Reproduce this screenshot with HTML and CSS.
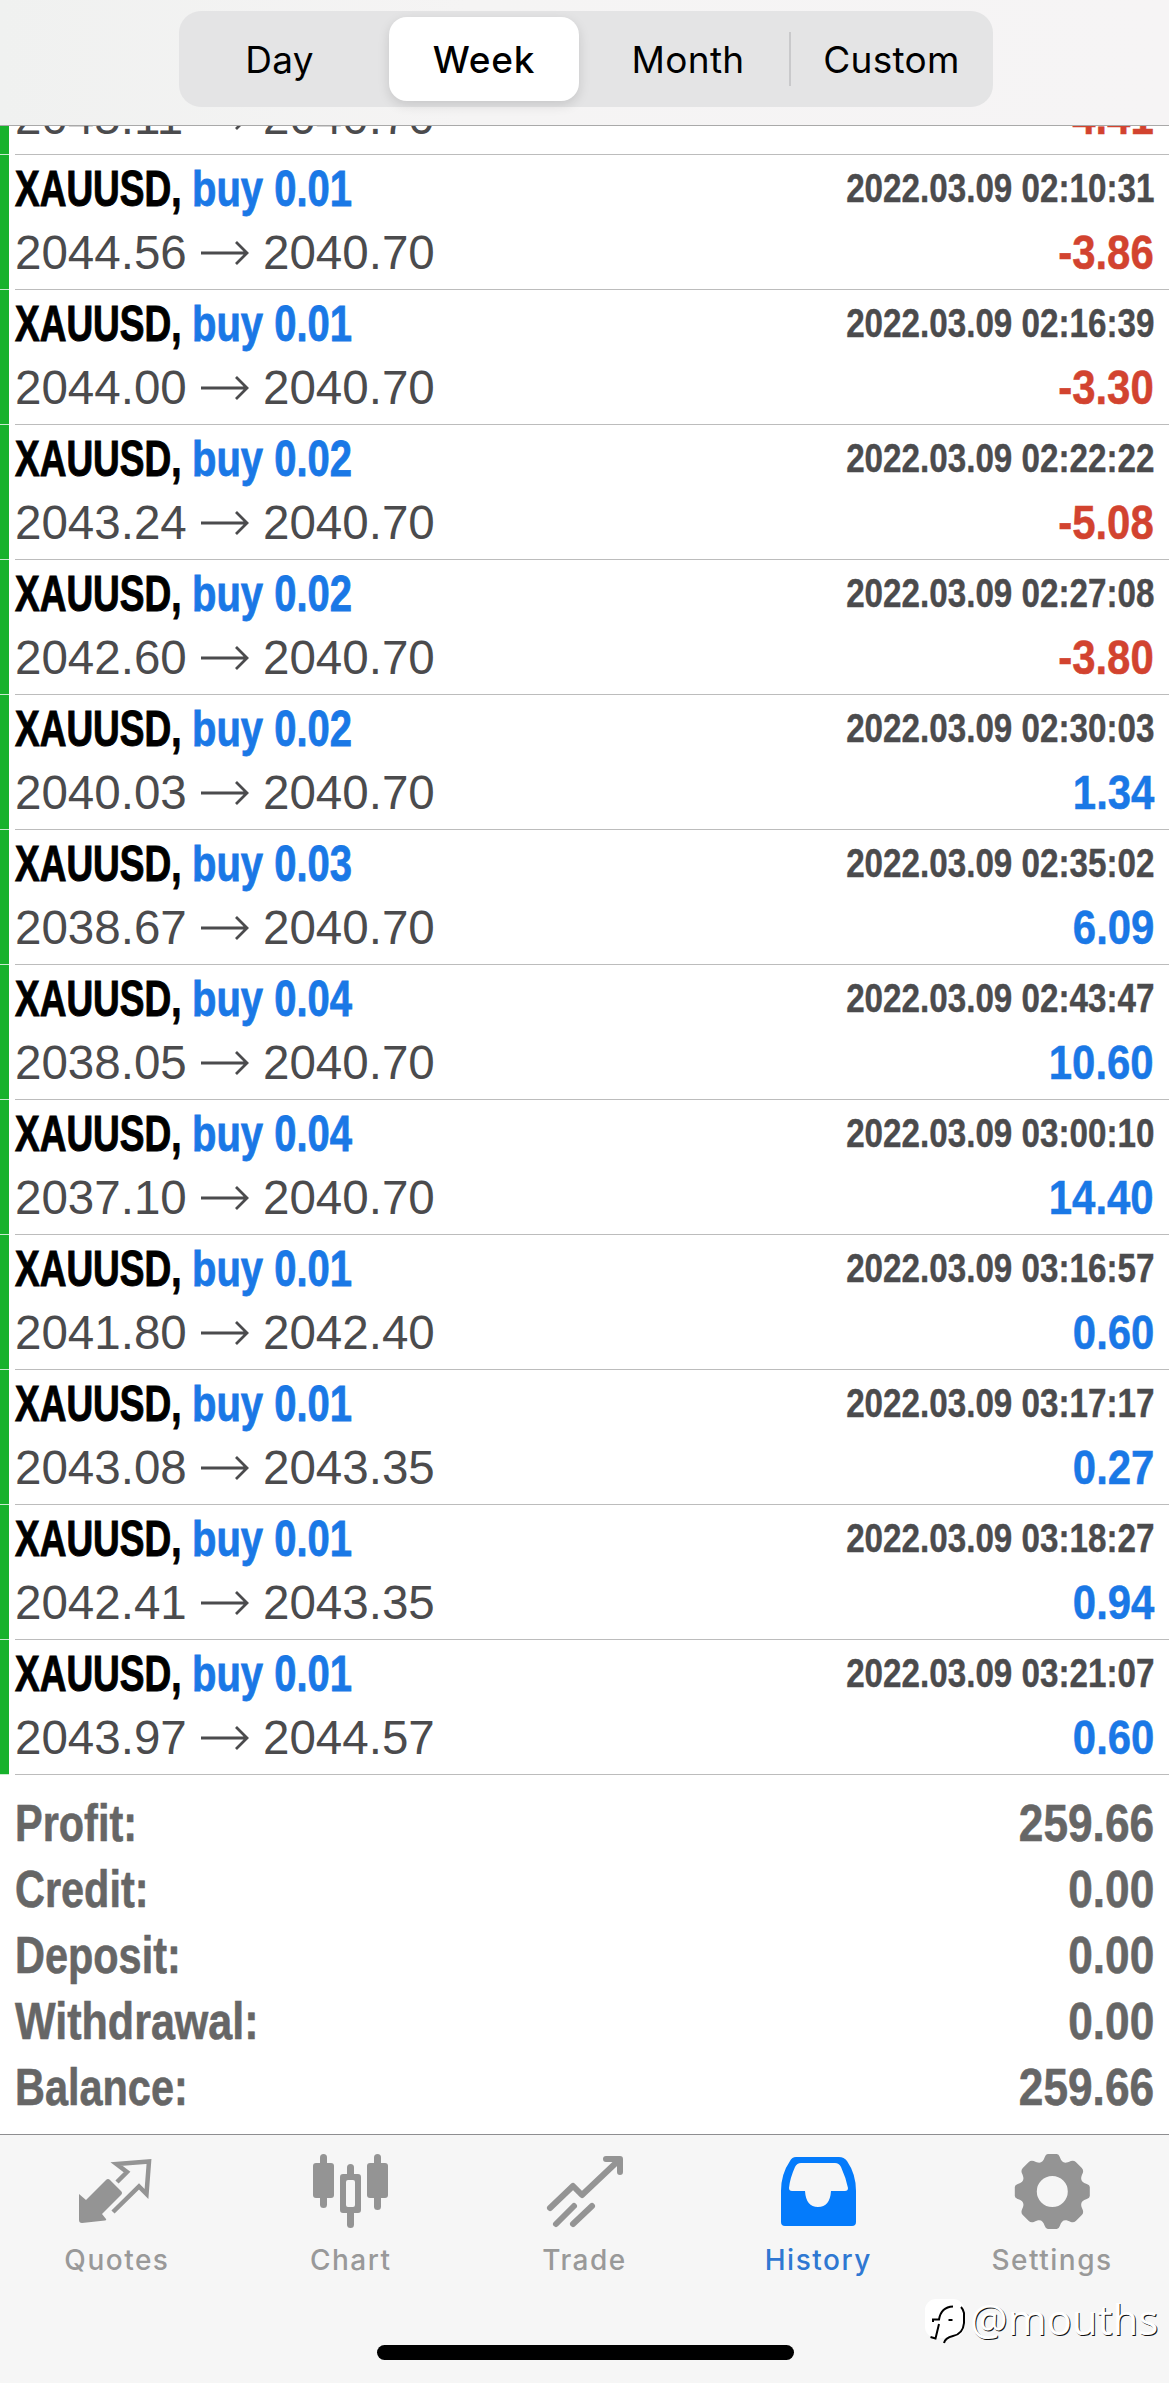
FILE: index.html
```html
<!DOCTYPE html>
<html lang="en">
<head>
<meta charset="utf-8">
<title>History</title>
<link rel="stylesheet" href="styles.css">
</head>
<body>
<div class="screen">
  <header class="topbar">
    <div class="segments">
      <span class="segment segment-day">Day</span>
      <span class="segment segment-active">Week</span>
      <span class="segment segment-month">Month</span>
      <span class="segment">Custom</span>
    </div>
  </header>
  <main class="history" id="history"></main>
  <section class="summary">
    <div class="total"><span class="total-label">Profit:</span><span class="total-value">259.66</span></div>
    <div class="total"><span class="total-label">Credit:</span><span class="total-value">0.00</span></div>
    <div class="total"><span class="total-label">Deposit:</span><span class="total-value">0.00</span></div>
    <div class="total"><span class="total-label total-label-wide">Withdrawal:</span><span class="total-value">0.00</span></div>
    <div class="total"><span class="total-label">Balance:</span><span class="total-value">259.66</span></div>
  </section>
  <footer class="tabbar">
    <nav class="tabs">
      <div class="tab">
        <svg class="icon" viewBox="0 0 80 80" fill="none">
          <path d="M2 37l7 6L29 23q2-2 4 0l11 11q2 2 0 4L25 57l4 5q1 1-1 1.500L5 66q-3 0-3-3z" fill="#949494"/>
          <path d="M40 25l10-10L39.500 7 72 4.500 69.500 37 62 29.500 36 55" stroke="#949494" stroke-width="4.500"/>
        </svg>
        <span>Quotes</span>
      </div>
      <div class="tab">
        <svg class="icon" viewBox="0 0 80 80" fill="#949494">
          <rect x="9" y="-3" width="7" height="54" rx="3.500"/><rect x="2" y="6" width="21" height="35" rx="3"/>
          <rect x="36" y="7" width="7" height="14" rx="3.500"/><rect x="36" y="52" width="7" height="19" rx="3.500"/>
          <path fill-rule="evenodd" d="M32 17h15q3 0 3 3v33q0 3-3 3H32q-3 0-3-3V20q0-3 3-3zm5 6q-2 0-2 2v23q0 2 2 2h5q2 0 2-2V25q0-2-2-2z"/>
          <rect x="63" y="-3" width="7" height="56" rx="3.500"/><rect x="56" y="6" width="21" height="35" rx="3"/>
        </svg>
        <span>Chart</span>
      </div>
      <div class="tab">
        <svg class="icon" viewBox="0 0 80 80" fill="none" stroke="#949494" stroke-width="6" stroke-linecap="round" stroke-linejoin="round">
          <path d="M6 51l23-22 9 9L75 3M62 2h14v13" />
          <path d="M12 67l18-18M29 67l19-18"/>
        </svg>
        <span>Trade</span>
      </div>
      <div class="tab tab-active">
        <svg class="icon" viewBox="0 0 80 80">
          <path fill="#047bfb" fill-rule="evenodd" d="M18 0h43q5 0 8 4 9 13 9 30v31q0 4-4 4H7q-4 0-4-4V34Q3 17 12 4q2-4 6-4zm5 6q-4 0-6 4Q12 21 11 31q0 3 3 3h13q1 16 13 16t13-16h14q3 0 3-3-2-10-7-21-2-4-6-4z"/>
        </svg>
        <span>History</span>
      </div>
      <div class="tab">
        <svg class="icon" viewBox="0 0 80 80">
          <path transform="translate(.8 0)" fill="#949494" fill-rule="evenodd" d="M35-3h9q2 0 3 3c2 6 5 7 11 4q3-1 5 1l6 6q2 2 1 5c-3 6-2 9 4 11q3 1 3 3v9q0 2-3 3c-6 2-7 5-4 11q1 3-1 5l-6 6q-2 2-5 1c-6-3-9-2-11 4q-1 3-3 3h-9q-2 0-3-3c-2-6-5-7-11-4q-3 1-5-1l-6-6q-2-2-1-5c3-6 2-9-4-11q-3-1-3-3v-9q0-2 3-3c6-2 7-5 4-11q-1-3 1-5l6-6q2-2 5-1c6 3 9 2 11-4q1-3 3-3zM39.500 19a15.500 15.500 0 1 0 0 31 15.500 15.500 0 0 0 0-31z"/>
        </svg>
        <span>Settings</span>
      </div>
    </nav>
    <div class="home-indicator"></div>
  </footer>
  <div class="watermark">
    <svg class="watermark-logo" viewBox="0 0 42 48">
      <rect x="1" y="1" width="39" height="39" rx="11" fill="#fff"/>
      <path d="M6.500 39l5 1.500L15 26M9 24v-2.500h6Q17 9 29 8.500M24.500 22h4M20 45q1-5 9-7 10-2 11-13V15q-1-4-3-6" fill="none" stroke="#000" stroke-width="2"/>
    </svg>
    <span class="watermark-name">@mouths</span>
  </div>
</div>
<script src="history.js"></script>
</body>
</html>
```
FILE: styles.css
```css
* { box-sizing: border-box; }
body { margin: 0; background: #fff; font-family: "Liberation Sans", Arial, sans-serif; }
.screen { position: relative; width: 1169px; height: 2383px; display: flex; flex-direction: column; overflow: hidden; }

.topbar { flex: none; height: 126px; padding: 11px 0 0 179px; border-bottom: 1px solid #a9a9a9; background: linear-gradient(90deg, #f0f1f0, #f5f4f4 40%, #f6f4f5); }
.segments { display: flex; width: 814px; height: 96px; padding: 6px 5px; border-radius: 22px; background: #e4e4e5; font: 400 37px/85px Inter, sans-serif; letter-spacing: .3px; color: #000; }
.segment { flex: none; width: 201px; text-align: center; }
.segment-day { width: 205px; padding-right: 14px; }
.segment-active { width: 190px; background: #fff; border-radius: 18px; font-weight: 500; letter-spacing: .8px; box-shadow: 0 4px 12px rgba(0,0,0,.13); }
.segment-month { width: 212px; padding-left: 6px; background: linear-gradient(#c9c9cb, #c9c9cb) right center / 2px 54px no-repeat; }

.history { flex: none; height: 1649px; overflow: hidden; display: flex; flex-direction: column; justify-content: flex-end; }
.deal { flex: none; height: 135px; border-left: 9px solid #18b22c; position: relative; display: flex; flex-direction: column; padding: 3px 15px 0 6px; }
.deal::after { content: ""; position: absolute; left: 6px; right: 0; bottom: 0; height: 1px; background: #bcbcbc; }
.deal::before { content: ""; position: absolute; left: -9px; width: 9px; bottom: 0; height: 1px; background: #c8ecce; }
.line { display: flex; align-items: baseline; height: 63px; line-height: 63px; white-space: nowrap; }
.symbol { width: 177px; font-size: 50px; font-weight: 700; color: #000; transform: scaleX(.74); transform-origin: left; -webkit-text-stroke: 1px; }
.order { font-size: 50px; font-weight: 700; color: #1a78e6; transform: scaleX(.8); transform-origin: left; -webkit-text-stroke: .8px; }
.time { margin-left: auto; line-height: 60px; align-self: flex-start; font-size: 40px; font-weight: 700; color: #4b4b4d; transform: scaleX(.83); transform-origin: right; -webkit-text-stroke: .4px; }
.price { width: 186px; font-size: 48px; color: #4b4b4d; transform: scaleX(.99); transform-origin: left; }
.arrow { width: 62px; height: 34px; align-self: center; flex: none; }
.amount { margin-left: auto; font-size: 49px; font-weight: 700; transform: scaleX(.855); transform-origin: right; -webkit-text-stroke: .5px; }
.gain { color: #1a78e6; }
.loss { color: #d2432f; }

.summary { flex: none; height: 360px; padding: 15px 15px 0; border-bottom: 1px solid #8e8e90; }
.total { display: flex; justify-content: space-between; height: 66px; line-height: 66px; font-size: 52px; font-weight: 700; color: #666; -webkit-text-stroke: .6px; }
.total-label { transform: scaleX(.797); transform-origin: left; }
.total-label-wide { transform: scaleX(.828); }
.total-value { transform: scaleX(.85); transform-origin: right; }

.tabbar { flex: 1; background: #f6f6f6; }
.tabs { display: flex; height: 210px; }
.tab { flex: 1; display: flex; flex-direction: column; align-items: center; padding-top: 22px; font: 500 28px/36px Inter, sans-serif; letter-spacing: 1.5px; color: #999; }
.icon { width: 80px; height: 80px; margin-bottom: 5px; overflow: visible; }
.tab-active { color: #2f78d2; }
.home-indicator { width: 417px; height: 15px; margin: 0 0 0 377px; border-radius: 8px; background: #000; }
.watermark { position: absolute; left: 924px; top: 2298px; display: flex; align-items: flex-start; }
.watermark-logo { width: 42px; height: 48px; margin-right: 4px; }
.watermark-name { margin-top: -4px; font: 400 42px/50px "Open Sans", sans-serif; color: #fff; text-shadow: 1px 1px 0 #111; }
```
FILE: history.js
```js
const deals = [
  ["0.01", "2045.11", "2040.70", "2022.03.09 02:05:12", "-4.41"],
  ["0.01", "2044.56", "2040.70", "2022.03.09 02:10:31", "-3.86"],
  ["0.01", "2044.00", "2040.70", "2022.03.09 02:16:39", "-3.30"],
  ["0.02", "2043.24", "2040.70", "2022.03.09 02:22:22", "-5.08"],
  ["0.02", "2042.60", "2040.70", "2022.03.09 02:27:08", "-3.80"],
  ["0.02", "2040.03", "2040.70", "2022.03.09 02:30:03", "1.34"],
  ["0.03", "2038.67", "2040.70", "2022.03.09 02:35:02", "6.09"],
  ["0.04", "2038.05", "2040.70", "2022.03.09 02:43:47", "10.60"],
  ["0.04", "2037.10", "2040.70", "2022.03.09 03:00:10", "14.40"],
  ["0.01", "2041.80", "2042.40", "2022.03.09 03:16:57", "0.60"],
  ["0.01", "2043.08", "2043.35", "2022.03.09 03:17:17", "0.27"],
  ["0.01", "2042.41", "2043.35", "2022.03.09 03:18:27", "0.94"],
  ["0.01", "2043.97", "2044.57", "2022.03.09 03:21:07", "0.60"]
];

document.getElementById("history").innerHTML = deals.map(([lots, open, close, time, amount]) => `
  <article class="deal">
    <div class="line"><span class="symbol">XAUUSD,</span><span class="order">buy ${lots}</span><span class="time">${time}</span></div>
    <div class="line"><span class="price">${open}</span><svg class="arrow" viewBox="0 0 62 34" fill="none" stroke="#4b4b4d" stroke-width="2.800"><path d="M0 17h45M35 6l11 11-11 11"/></svg><span class="price">${close}</span><span class="amount ${amount < 0 ? "loss" : "gain"}">${amount}</span></div>
  </article>`).join("");
```
